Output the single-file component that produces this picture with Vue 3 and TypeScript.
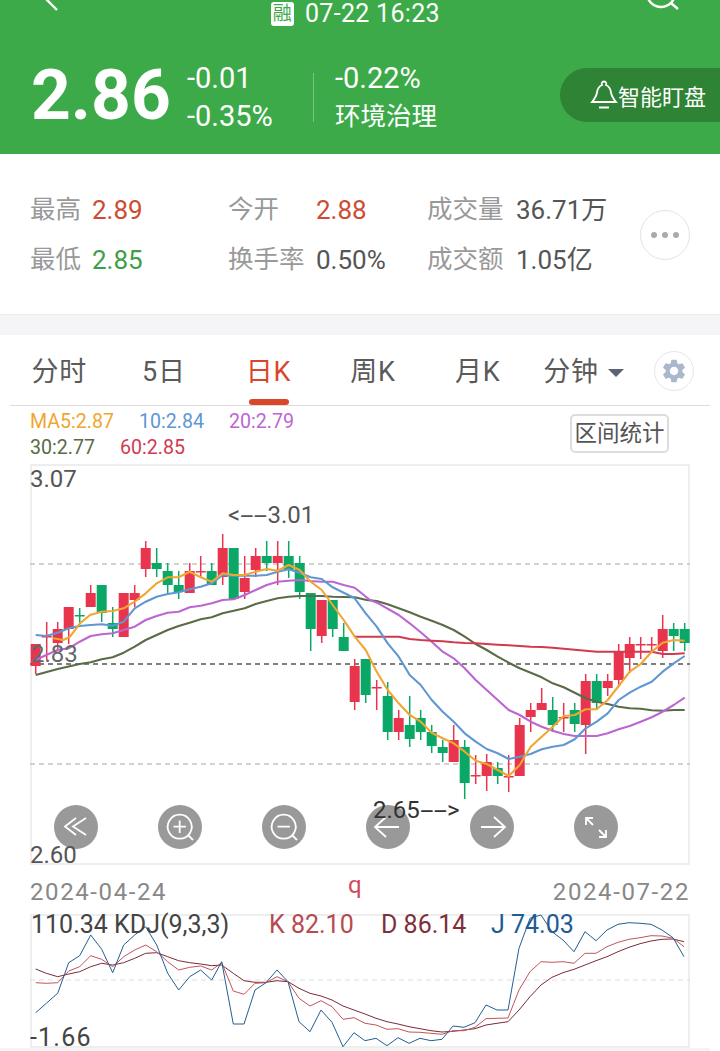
<script setup lang="ts">
type Candle = [number, number, number, number, 'u' | 'd'];

const stats = [
  { label: '最高', value: '2.89', tone: 'up' },
  { label: '今开', value: '2.88', tone: 'up' },
  { label: '成交量', value: '36.71万', tone: '' },
  { label: '最低', value: '2.85', tone: 'down' },
  { label: '换手率', value: '0.50%', tone: '' },
  { label: '成交额', value: '1.05亿', tone: '' },
];

const tabs = ['分时', '5日', '日K', '周K', '月K'];

const legend = [
  [
    { text: 'MA5:2.87', color: '#f0a632' },
    { text: '10:2.84', color: '#5f97d2' },
    { text: '20:2.79', color: '#bb66d2' },
  ],
  [
    { text: '30:2.77', color: '#5a6b47' },
    { text: '60:2.85', color: '#d23a50' },
  ],
];

// high, body top, body bottom, low
const candles: Candle[] = [
  [644, 644, 666, 674, 'u'], [622, 636, 637, 660, 'u'], [622, 629, 643, 650, 'u'], [607, 607, 629, 644, 'u'],
  [608, 615, 616, 623, 'd'], [585, 593, 607, 607, 'u'], [585, 585, 613, 622, 'd'], [607, 623, 629, 637, 'd'],
  [593, 593, 637, 637, 'u'], [585, 593, 600, 607, 'u'], [541, 548, 569, 577, 'u'], [548, 563, 569, 577, 'd'],
  [563, 571, 585, 593, 'd'], [571, 585, 592, 599, 'd'], [563, 571, 593, 593, 'u'], [556, 571, 572, 577, 'u'],
  [563, 571, 585, 585, 'd'], [534, 548, 577, 585, 'u'], [548, 548, 599, 599, 'd'], [556, 578, 592, 599, 'u'],
  [548, 556, 570, 577, 'u'], [541, 556, 563, 571, 'd'], [541, 556, 563, 585, 'u'], [541, 556, 570, 578, 'd'],
  [556, 563, 592, 599, 'd'], [593, 593, 629, 651, 'd'], [600, 600, 636, 643, 'u'], [600, 600, 629, 637, 'd'],
  [623, 637, 651, 651, 'd'], [659, 666, 702, 710, 'u'], [659, 659, 695, 703, 'd'], [680, 687, 688, 710, 'u'],
  [682, 696, 732, 740, 'd'], [710, 718, 732, 740, 'u'], [696, 725, 739, 747, 'd'], [710, 718, 732, 740, 'd'],
  [725, 732, 746, 753, 'd'], [740, 747, 753, 762, 'd'], [725, 740, 762, 762, 'u'], [740, 747, 783, 799, 'd'],
  [755, 775, 776, 784, 'u'], [754, 762, 776, 791, 'u'], [762, 768, 776, 784, 'd'], [755, 776, 777, 792, 'u'],
  [718, 725, 776, 776, 'u'], [703, 710, 717, 732, 'u'], [688, 703, 710, 710, 'u'], [697, 710, 725, 732, 'd'],
  [703, 717, 718, 732, 'u'], [703, 710, 724, 732, 'd'], [674, 681, 725, 754, 'u'], [674, 681, 703, 710, 'd'],
  [674, 681, 688, 696, 'u'], [644, 652, 680, 687, 'u'], [637, 644, 658, 673, 'u'], [637, 644, 645, 659, 'u'],
  [637, 644, 645, 652, 'u'], [615, 629, 651, 658, 'u'], [623, 629, 636, 651, 'd'], [623, 629, 643, 651, 'd'],
];

function candleX(i: number) {
  return 35.7 + i * 11;
}

// coordinates were read from 3x crops, so each part has an origin and a scale of 3
function trace(ox: number, oy: number, coords: number[]) {
  const out: string[] = [];
  for (let i = 0; i < coords.length; i += 2) {
    out.push(`${(ox + coords[i] / 3).toFixed(1)},${(oy + coords[i + 1] / 3).toFixed(1)}`);
  }
  return out.join(' ');
}

const maLines = [
  {
    color: '#5a6b47',
    points: trace(20, 500, [47,525,113,507,179,492,212,487,245,478,278,472,311,458,344,440,377,420,410,405,443,390,476,378,509,368,542,358,575,352,608,340,641,332,674,325,707,312,740,303,773,295,806,290,839,288,872,288,905,288,938,290,971,291,1004,292])
      + ' ' + trace(340, 600, [80,0,110,3,143,13,176,25,209,37,242,50,275,62,308,75,341,90,374,110,407,132,440,150,473,170,506,188,539,205,572,218,605,232,638,250,671,262,704,278,737,295,770,305,803,312,836,320,869,325,902,326,935,331,968,332,1001,330,1034,330]),
  },
  {
    color: '#bb66d2',
    points: trace(20, 500, [47,480,79,465,113,450,146,445,179,425,212,408,245,403,278,400,311,390,344,380,377,360,410,348,443,338,476,335,509,322,542,317,575,310,608,300,641,298,674,285,707,270,740,255,773,245,806,242,839,240,872,243,905,245,938,245,971,255,1004,263,1050,300])
      + ' ' + trace(340, 600, [115,10,176,45,209,70,242,97,275,125,308,155,341,175,374,205,407,240,440,270,473,300,506,330,539,345,572,365,605,380,638,392,671,402,704,408,737,408,770,408,803,400,836,388,869,378,902,365,935,352,968,335,1001,315,1034,293]),
  },
  {
    color: '#d23a50',
    points: trace(340, 600, [44,110,77,110,110,110,143,110,176,110,209,117,242,120,275,122,308,124,341,127,374,129,407,130,440,132,473,134,506,136,539,138,572,140,605,141,638,143,671,146,704,149,737,152,770,155,803,155,836,155,869,155,902,155,935,155,968,162,1001,162,1034,160]),
  },
  {
    color: '#5f97d2',
    points: trace(20, 500, [47,405,79,408,113,398,146,385,179,378,212,375,245,373,278,377,311,365,344,325,377,305,410,290,443,282,476,277,509,268,542,260,575,250,608,225,641,227,674,227,707,227,740,225,773,215,806,208,839,218,872,232,905,237,938,262,971,278,1004,295])
      + ' ' + trace(340, 600, [77,40,110,80,143,130,176,170,209,225,242,255,275,300,308,335,341,365,374,400,407,425,440,447,473,460,506,477,539,470,572,462,605,448,638,440,671,435,704,418,737,385,770,365,803,340,836,300,869,278,902,260,935,245,968,215,1001,190,1034,168]),
  },
  {
    color: '#f0a632',
    points: trace(20, 500, [100,415,130,420,150,410,180,370,210,345,245,335,278,333,311,325,344,305,377,280,410,250,443,232,476,232,509,215,542,232,575,245,608,220,641,225,674,225,707,215,740,207,773,212,806,195,839,210,872,245,905,270,938,315,971,360,1004,410])
      + ' ' + trace(340, 600, [77,150,110,215,143,270,176,310,209,345,242,365,275,398,308,415,341,430,374,455,407,482,440,492,473,510,506,528,539,495,572,440,605,410,638,380,671,348,704,345,737,328,770,328,803,300,836,258,869,215,902,192,935,155,968,128,1001,120,1034,122]),
  },
];

const kdjLines = [
  {
    color: '#7a2b38',
    points: trace(20, 790, [47,537,79,550,113,560,146,552,179,545,212,530,245,520,278,525,311,518,344,505,377,490,410,488,443,500,476,512,509,518,542,522,575,527,605,525,640,550,672,572,705,577,738,577,771,572,804,575,837,595,870,610,903,618,936,630,969,648,1002,660])
      + ' ' + trace(350, 790, [45,672,78,685,111,695,144,702,177,710,210,716,243,722,276,726,309,724,342,720,375,716,408,705,441,700,474,695,507,660,540,620,573,585,606,562,639,548,672,538,705,525,738,512,771,500,804,485,837,472,870,461,903,453,936,448,969,447,1002,455]),
  },
  {
    color: '#c0555a',
    points: trace(20, 790, [47,578,79,580,113,578,146,543,179,530,212,497,245,508,278,530,311,500,344,480,377,465,410,485,443,515,476,540,509,532,542,528,575,540,605,518,640,603,672,613,705,580,738,578,771,560,804,575,837,625,870,648,903,632,936,650,969,688,1002,683])
      + ' ' + trace(350, 790, [45,700,78,705,111,718,144,716,177,726,210,727,243,730,276,733,309,722,342,722,375,712,408,686,441,685,474,684,507,600,540,545,573,515,606,517,639,515,672,520,705,490,738,490,771,470,804,457,837,448,870,443,903,437,936,438,969,445,1002,470]),
  },
  {
    color: '#225f94',
    points: trace(20, 790, [47,668,79,640,113,610,146,518,179,497,212,435,245,478,278,548,311,465,344,435,377,410,410,465,443,550,476,600,509,560,542,540,575,570,605,515,640,702,672,702,705,600,738,578,771,540,804,575,837,695,870,725,903,660,936,697,969,770,1002,728])
      + ' ' + trace(350, 790, [45,752,78,745,111,767,144,743,177,760,210,745,243,752,276,748,309,708,342,712,375,698,408,645,441,660,474,660,507,475,540,385,573,375,606,425,639,450,672,485,705,425,738,452,771,420,804,403,837,398,870,400,903,403,936,420,969,443,1002,500]),
  },
];

const chartButtons = [
  'M22 13 11 21.5 22 30M32 13 19 21.5 32 30',
  'M21.7 9.7a12 12 0 1 0 .01 0M30.5 30.5 35 35M15.5 21.7h12.4M21.7 15.5v12.4',
  'M21.7 9.7a12 12 0 1 0 .01 0M30.5 30.5 35 35M15.5 21.7h12.4',
  'M33 22H10M20 12 9 22l11 10',
  'M11 22h23M24 12l11 10-11 10',
  'M12 20v-7h7M12 13l7 7M32 25v7h-7M32 32l-7-7',
];
</script>

<template>
  <div class="page">
    <header class="top">
      <div class="topbar">
        <svg class="back" width="20" height="12" viewBox="0 0 20 12">
          <path d="M13 10 1 -2" />
        </svg>
        <div class="time">
          <span class="badge">融</span>
          <span>07-22 16:23</span>
        </div>
        <svg class="search" width="36" height="12" viewBox="0 0 36 12">
          <circle cx="14" cy="-7" r="14" />
          <path d="M24 3 31 9" />
        </svg>
      </div>
      <div class="quote">
        <div class="price">2.86</div>
        <div class="change">
          <div>-0.01</div>
          <div>-0.35%</div>
        </div>
        <div class="divider"></div>
        <div class="sector">
          <div>-0.22%</div>
          <div class="sector-name">环境治理</div>
        </div>
        <div class="watch">
          <svg width="28" height="30" viewBox="0 0 28 30">
            <path d="M14 1.5a2.3 2.3 0 0 1 2 3.5c3 1.2 4.5 4 5 7.5.5 3.5 2.5 6.5 5 9.5H2c2.5-3 4.5-6 5-9.5.5-3.5 2-6.3 5-7.5a2.3 2.3 0 0 1 2-3.5zM9 27.5h10" />
          </svg>
          <span>智能盯盘</span>
        </div>
      </div>
    </header>

    <section class="summary">
      <div class="stats">
        <template v-for="s in stats" :key="s.label">
          <span class="stat-label">{{ s.label }}</span>
          <span class="stat-value" :class="s.tone">{{ s.value }}</span>
        </template>
      </div>
      <div class="more">
        <i></i><i></i><i></i>
      </div>
    </section>

    <div class="band"></div>

    <nav class="tabs">
      <div v-for="t in tabs" :key="t" class="tab" :class="{ active: t === '日K' }">{{ t }}</div>
      <div class="tab minutes">分钟<span class="caret"></span></div>
      <div class="gear">
        <svg width="28" height="28" viewBox="0 0 24 24">
          <path d="M19.14 12.94c.04-.3.06-.61.06-.94 0-.32-.02-.64-.07-.94l2.03-1.58a.49.49 0 0 0 .12-.61l-1.92-3.32a.488.488 0 0 0-.59-.22l-2.39.96c-.5-.38-1.03-.7-1.62-.94l-.36-2.54a.484.484 0 0 0-.48-.41h-3.84c-.24 0-.43.17-.47.41l-.36 2.54c-.59.24-1.13.57-1.62.94l-2.39-.96c-.22-.08-.47 0-.59.22L2.74 8.87c-.12.21-.08.47.12.61l2.03 1.58c-.05.3-.09.63-.09.94s.02.64.07.94l-2.03 1.58a.49.49 0 0 0-.12.61l1.92 3.32c.12.22.37.29.59.22l2.39-.96c.5.38 1.03.7 1.62.94l.36 2.54c.05.24.24.41.48.41h3.84c.24 0 .44-.17.47-.41l.36-2.54c.59-.24 1.13-.56 1.62-.94l2.39.96c.22.08.47 0 .59-.22l1.92-3.32c.12-.22.07-.47-.12-.61l-2.01-1.58zM12 15.6c-1.98 0-3.6-1.62-3.6-3.6s1.62-3.6 3.6-3.6 3.6 1.62 3.6 3.6-1.62 3.6-3.6 3.6z" />
        </svg>
      </div>
    </nav>

    <div class="legend-row">
      <div class="legend">
        <div v-for="(row, r) in legend" :key="r" class="legend-line">
          <span v-for="m in row" :key="m.text" :style="{ color: m.color }">{{ m.text }}</span>
        </div>
      </div>
      <div class="range">区间统计</div>
    </div>

    <div class="chart">
      <svg class="plot" width="660" height="401" viewBox="30 464 660 401">
        <line x1="30" x2="690" y1="564" y2="564" class="grid" />
        <line x1="30" x2="690" y1="764" y2="764" class="grid" />
        <line x1="30" x2="690" y1="664" y2="664" class="last" />
        <g v-for="(c, i) in candles" :key="i" :fill="c[4] === 'u' ? '#e8344c' : '#0aa866'">
          <rect :x="candleX(i) - 0.75" :y="c[0]" width="1.5" :height="c[3] - c[0]" />
          <rect :x="candleX(i) - 5" :y="c[1]" width="10" :height="Math.max(c[2] - c[1], 1.5)" />
        </g>
        <polyline v-for="l in maLines" :key="l.color" :points="l.points" :stroke="l.color" class="ma" />
      </svg>
      <div class="tools">
        <div v-for="(d, i) in chartButtons" :key="i" class="tool">
          <svg width="44" height="44" viewBox="0 0 44 44"><path :d="d" /></svg>
        </div>
      </div>
      <span class="mark y-top">3.07</span>
      <span class="mark y-mid">2.83</span>
      <span class="mark y-low">2.60</span>
      <span class="mark hi">&lt;<span class="dash">--</span>3.01</span>
      <span class="mark lo">2.65<span class="dash">--</span>&gt;</span>
    </div>

    <div class="dates">
      <span>2024-04-24</span>
      <span class="q">q</span>
      <span>2024-07-22</span>
    </div>

    <div class="kdj">
      <svg class="plot" width="660" height="134" viewBox="30 914 660 134">
        <line x1="30" x2="690" y1="980" y2="980" class="kdj-grid" />
        <polyline v-for="l in kdjLines" :key="l.color" :points="l.points" :stroke="l.color" class="kdj-line" />
      </svg>
      <div class="kdj-head">
        <span class="kdj-name">110.34 KDJ(9,3,3)</span>
        <span class="k">K 82.10</span>
        <span class="d">D 86.14</span>
        <span class="j">J 74.03</span>
      </div>
      <span class="kdj-min">-1.66</span>
    </div>
    <div class="foot"></div>
  </div>
</template>

<style>
html,
body {
  margin: 0;
  background: #fff;
}
</style>

<style scoped>
.page {
  width: 720px;
  height: 1051px;
  overflow: hidden;
  background: #fff;
  font-family: Roboto, "Noto Sans CJK SC", sans-serif;
  color: #555;
}

.top {
  height: 154px;
  background: #3daa4a;
  color: #fff;
}

.topbar {
  height: 30px;
  display: flex;
  align-items: flex-start;
  padding: 0 37px 0 44px;
  position: relative;
}

.back,
.search {
  fill: none;
  stroke: #fff;
  stroke-width: 2.4;
}

.search {
  margin-left: auto;
}

.time {
  position: absolute;
  left: 271px;
  top: 2px;
  display: flex;
  align-items: center;
  gap: 11px;
  font-size: 25px;
  line-height: 24px;
  letter-spacing: 0.3px;
}

.badge {
  width: 23px;
  height: 24px;
  border-radius: 3px;
  background: #fff;
  color: #3daa4a;
  font-size: 19px;
  line-height: 24px;
  text-align: center;
}

.quote {
  height: 124px;
  display: flex;
  align-items: center;
  padding-left: 32px;
  padding-top: 10px;
  box-sizing: border-box;
}

.price {
  width: 155px;
  font-size: 69.5px;
  font-weight: 700;
  line-height: 80px;
  margin: -2px 1px 0 -1px;
}

.change {
  width: 126px;
  font-size: 29px;
  line-height: 38px;
}

.divider {
  width: 1px;
  height: 49px;
  margin-right: 21px;
  background: rgba(255, 255, 255, 0.3);
}

.sector {
  width: 225px;
  font-size: 29px;
  line-height: 38px;
}

.sector-name {
  font-size: 25.5px;
}

.watch {
  width: 160px;
  height: 54px;
  margin: -4px 0 0 auto;
  box-sizing: border-box;
  padding-left: 30px;
  display: flex;
  align-items: center;
  border-radius: 27px 0 0 27px;
  background: #2e8335;
  font-size: 22px;
}

.watch svg {
  fill: none;
  stroke: #fff;
  stroke-width: 1.8;
  flex: none;
}

.summary {
  height: 161px;
  box-sizing: border-box;
  padding-top: 31px;
  padding-bottom: 29px;
  display: flex;
  align-items: center;
  border-bottom: 1px solid #ececf0;
}

.stats {
  width: 640px;
  box-sizing: border-box;
  padding-left: 30px;
  display: grid;
  grid-template-columns: 62px 136px 88px 111px 89px 124px;
  grid-auto-rows: 50px;
  align-items: center;
  font-size: 26px;
  line-height: 32px;
}

.stat-label {
  color: #999;
  font-size: 25.5px;
  margin-bottom: 2px;
  white-space: nowrap;
}

.stat-value {
  color: #555;
  white-space: nowrap;
}

.stat-value.up {
  color: #cd4c30;
}

.stat-value.down {
  color: #3c9f46;
}

.more {
  width: 50px;
  height: 50px;
  box-sizing: border-box;
  border: 1px solid #e3e3e3;
  border-radius: 50%;
  display: flex;
  align-items: center;
  justify-content: center;
  gap: 5px;
}

.more i {
  width: 6px;
  height: 6px;
  border-radius: 50%;
  background: #aaa;
}

.band {
  height: 20px;
  background: #f5f5f8;
}

.tabs {
  height: 71px;
  margin: 0 10px;
  box-sizing: border-box;
  display: flex;
  align-items: flex-start;
  border-bottom: 1px solid #ddd;
  position: relative;
}

.tab {
  width: 104.6px;
  height: 70px;
  line-height: 74px;
  text-align: center;
  font-size: 27px;
  letter-spacing: 0.8px;
  color: #5a5a5a;
  position: relative;
}

.tab:first-child {
  margin-left: -3px;
}

.tab.active {
  color: #d9472b;
}

.tab.active::after {
  content: "";
  position: absolute;
  left: 33px;
  bottom: 0;
  width: 40px;
  height: 6px;
  border-radius: 3px;
  background: #d9472b;
}

.minutes {
  width: 107px;
}

.caret {
  display: inline-block;
  width: 0;
  height: 0;
  margin-left: 9px;
  vertical-align: 4px;
  border-left: 8px solid transparent;
  border-right: 8px solid transparent;
  border-top: 8px solid #5b6474;
}

.gear {
  width: 40px;
  height: 40px;
  margin-top: 16px;
  margin-left: 17px;
  box-sizing: border-box;
  border: 1.5px solid #e6e6ea;
  border-radius: 50%;
  display: flex;
  align-items: center;
  justify-content: center;
  fill: #a9b8ca;
}

.legend-row {
  height: 58px;
  padding-left: 30px;
  display: flex;
  align-items: flex-start;
}

.legend {
  width: 540px;
  padding-top: 3px;
  font-size: 19.6px;
  line-height: 26px;
}

.legend-line {
  display: flex;
  gap: 25px;
}

.range {
  width: 99px;
  height: 39px;
  margin-top: 8px;
  box-sizing: border-box;
  border: 2px solid #ddd;
  border-radius: 5px;
  text-align: center;
  font-size: 22.5px;
  line-height: 35px;
  color: #555;
}

.chart {
  position: relative;
  width: 660px;
  height: 401px;
  margin-left: 30px;
  box-sizing: border-box;
  border: 2px solid #eee;
}

.plot {
  position: absolute;
  left: -2px;
  top: -2px;
}

.grid {
  stroke: #c4c4c4;
  stroke-width: 1.5;
  stroke-dasharray: 5 4;
}

.last {
  stroke: #555;
  stroke-width: 1.5;
  stroke-dasharray: 5 4;
}

.ma {
  fill: none;
  stroke-width: 2.1;
  stroke-linejoin: round;
}

.tools {
  position: absolute;
  left: 22px;
  top: 339px;
  display: flex;
  gap: 60px;
}

.tool {
  width: 44px;
  height: 44px;
  border-radius: 50%;
  background: #999;
}

.tool svg {
  display: block;
  fill: none;
  stroke: #fff;
  stroke-width: 1.8;
}

.mark {
  position: absolute;
  font-size: 24px;
  line-height: 28px;
  color: #555;
  white-space: nowrap;
}

.dash {
  display: inline-block;
  margin: 0 7px;
  transform: scaleX(2);
}

.y-top {
  left: -2px;
  top: -1px;
}

.y-mid {
  left: -1px;
  top: 174px;
  color: #666;
}

.y-low {
  left: -2px;
  top: 375px;
}

.hi {
  left: 196px;
  top: 35px;
}

.lo {
  left: 341px;
  top: 330px;
  color: #333;
}

.dates {
  height: 49px;
  margin: 0 30px;
  display: flex;
  justify-content: space-between;
  font-size: 24px;
  line-height: 54px;
  letter-spacing: 1.6px;
  color: #888;
  position: relative;
}

.q {
  position: absolute;
  left: 318px;
  top: -7px;
  color: #cf4a5e;
}

.kdj {
  position: relative;
  width: 660px;
  height: 134px;
  margin-left: 30px;
  box-sizing: border-box;
  border: 2px solid #eee;
}

.kdj-grid {
  stroke: #ddd;
  stroke-width: 1;
  stroke-dasharray: 5 4;
}

.kdj-line {
  fill: none;
  stroke-width: 1;
  stroke-linejoin: round;
}

.kdj-head {
  position: absolute;
  left: -1px;
  top: -5px;
  font-size: 25px;
  line-height: 28px;
  white-space: nowrap;
  display: flex;
}

.kdj-name {
  width: 238px;
  color: #444;
}

.k {
  width: 112px;
  color: #b84a4f;
}

.d {
  width: 110px;
  color: #7e2f3a;
}

.j {
  color: #1d5c94;
}

.kdj-min {
  position: absolute;
  left: -2px;
  top: 108px;
  font-size: 25px;
  line-height: 28px;
  color: #444;
  letter-spacing: 1.2px;
}

.foot {
  width: 710px;
  height: 3px;
  background: #f4f4f4;
}
</style>
